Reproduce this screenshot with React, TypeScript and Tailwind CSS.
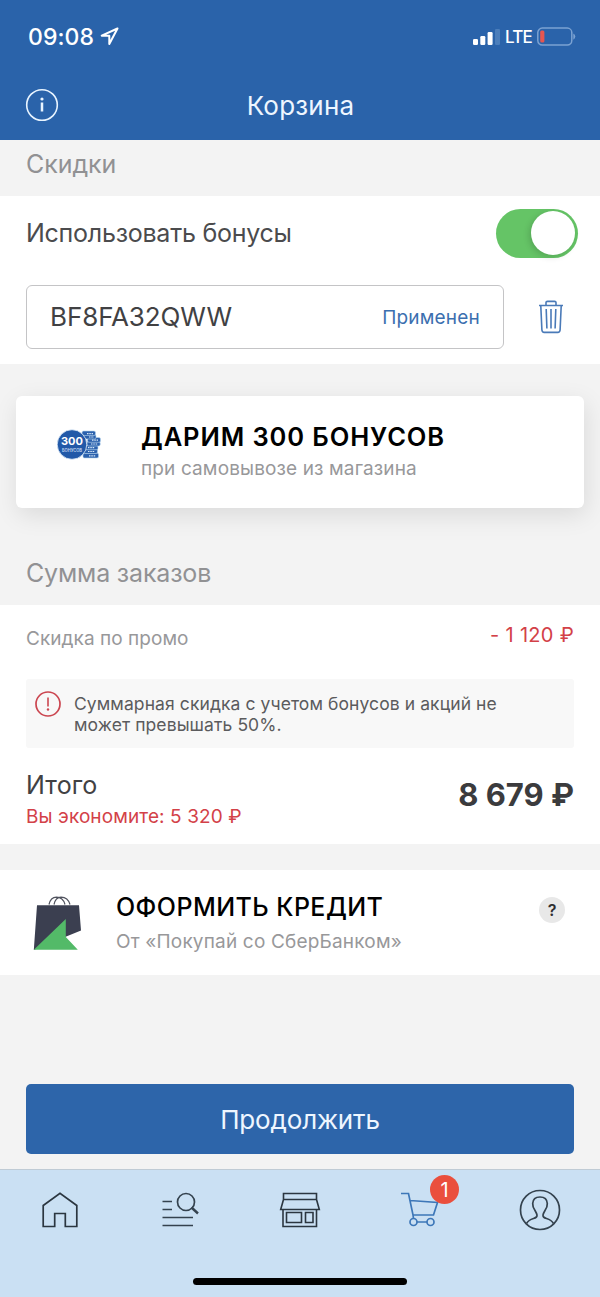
import React from "react";

function StatusBar() {
  return (
    <div className="flex h-[73px] items-center justify-between pl-7 pr-[24px] text-white">
      <div className="flex items-center gap-1.5">
        <span className="text-[23px] font-medium leading-7 tracking-[0.1px]">09:08</span>
        <svg width="19" height="19" viewBox="0 0 19 19" fill="none" stroke="white" strokeWidth="2" strokeLinejoin="round">
          <path d="M17.500 1.500 L1.700 8.700 H9.300 V17 Z" />
        </svg>
      </div>
      <div className="flex items-center">
        <svg width="27" height="18" viewBox="0 0 27 18" fill="white">
          <rect x="0" y="11" width="5" height="6" rx="1.2" />
          <rect x="7.3" y="8" width="5" height="9" rx="1.2" />
          <rect x="14.6" y="4" width="5" height="13" rx="1.2" />
          <rect x="22" y="1" width="5" height="16" rx="1.2" fill="#4b7ebb" />
        </svg>
        <span className="ml-[5px] w-[27px] text-[17px] font-medium leading-6 tracking-[-0.8px]">LTE</span>
        <svg className="ml-[5px]" width="39" height="19" viewBox="0 0 39 19">
          <rect x="0.8" y="1.1" width="34" height="17" rx="4.5" fill="none" stroke="#7ba2d2" strokeWidth="1.5" />
          <rect x="3.2" y="3.5" width="4.200" height="12" rx="1.5" fill="#e65650" />
          <path d="M36.300 6.500 Q38.300 7.700 38.300 9.500 Q38.300 11.500 36.300 12.700Z" fill="#7ba2d2" />
        </svg>
      </div>
    </div>
  );
}

function Header() {
  return (
    <header className="h-[140px] bg-[#2a63aa]">
      <StatusBar />
      <div className="grid h-[64px] grid-cols-[34px_1fr_34px] items-center px-[25px]">
        <svg width="34" height="34" viewBox="0 0 34 34" fill="none" stroke="#e8f4ff">
          <circle cx="17" cy="17" r="15.300" strokeWidth="1.6" />
          <path d="M17 14.500V23.500" strokeWidth="2.500" />
          <circle cx="17" cy="11" r="1.600" fill="#e8f4ff" stroke="none" />
        </svg>
        <h1 className="pl-px pt-[2px] text-center text-[26px] leading-8 tracking-[0.2px] text-[#eef6ff]">Корзина</h1>
      </div>
    </header>
  );
}

function TrashIcon() {
  return (
    <svg width="26" height="34" viewBox="0 0 26 34" fill="none" stroke="#4a7ab8" strokeWidth="1.6" strokeLinejoin="round">
      <path d="M1 5.500H25M8 5V2.600Q8 1.400 9.500 1.400H16.500Q18 1.400 18 2.600V5" />
      <path d="M2.800 6 L3.900 30Q4.100 32.400 6.200 32.400H19.800Q21.900 32.400 22.100 30L23.200 6" />
      <path d="M8.200 9L8.900 28.500M13 9V28.500M17.800 9L17.100 28.500" />
    </svg>
  );
}

function CoinsIcon() {
  return (
    <svg width="44" height="32" viewBox="0 0 44 32">
      <g fill="#2c61ad" stroke="#b9d6ee" strokeWidth="0.600">
        <rect x="26" y="24" width="15.500" height="5" rx="1.500" />
        <rect x="26" y="20" width="14.500" height="4.500" rx="1.500" />
        <rect x="27" y="16.200" width="14" height="4.500" rx="1.500" />
        <rect x="30" y="12.500" width="13.200" height="4.500" rx="1.500" />
        <rect x="30.500" y="8.500" width="13" height="4.800" rx="1.500" />
        <rect x="26" y="5.500" width="13" height="4.500" rx="1.500" />
        <rect x="25" y="2" width="13.500" height="4.500" rx="1.500" />
      </g>
      <path d="M30 4.700h6M32 8h5M35 11.200h6M34 15h7M31 18.700h7M31 22.500h7M32 26.800h7" stroke="#d7e9f8" strokeWidth="1.200" strokeDasharray="1.5 0.8" />
      <circle cx="15" cy="15.500" r="14.800" fill="#2259a8" stroke="#e4f0fa" strokeWidth="0.800" />
      <text x="15" y="16" textAnchor="middle" fontSize="11" fontWeight="700" fill="white" textLength="22" lengthAdjust="spacingAndGlyphs">300</text>
      <text x="15" y="22.800" textAnchor="middle" fontSize="4.400" fontWeight="600" fill="#c5daf2" textLength="20" lengthAdjust="spacingAndGlyphs">БОНУСОВ</text>
    </svg>
  );
}

function BagIcon() {
  return (
    <svg width="49" height="54" viewBox="0 0 49 54">
      <path d="M4 9.300H46L48 34.500L32 41L0.800 54Z" fill="#3b3f50" />
      <path d="M0.800 53.700L32.800 23V41L44.800 53.700Z" fill="#53ba68" />
      <g fill="none" stroke="#50535e" strokeWidth="1.200">
        <path d="M16 8.500Q17.500 1.500 23.500 1.200Q30 1.200 32 8.500" />
        <path d="M21 8.500Q22.500 1.500 28 1.200Q35 1.500 37 8.500" />
      </g>
    </svg>
  );
}

function Discounts() {
  return (
    <section>
      <h2 className="h-14 pl-[26px] pt-2 text-[25px] leading-8 tracking-[-0.05px] text-[#919193]">Скидки</h2>
      <div className="h-[168px] bg-white pl-[26px]">
        <div className="flex h-[74px] items-center justify-between pr-[22px]">
          <span className="text-[25px] leading-8 tracking-[-0.25px] text-[#4b4b4d]">Использовать бонусы</span>
          <button className="flex h-[49px] w-[82px] items-center justify-end rounded-full bg-[#65c466] pr-[3px]" aria-label="Использовать бонусы">
            <span className="size-11 rounded-full bg-white shadow-[-2px_2px_6px_rgba(0,0,0,0.15)]" />
          </button>
        </div>
        <div className="flex items-center pt-[15px]">
          <div className="flex h-[64px] w-[478px] items-center justify-between rounded-[6px] border border-[#c4c4c6] pl-[23px] pr-[23px]">
            <span className="text-[26px] leading-8 tracking-[-0.1px] text-[#414143]">BF8FA32QWW</span>
            <span className="pt-px text-[19px] leading-6 tracking-[0.2px] text-[#3b6faf]">Применен</span>
          </div>
          <button className="ml-[34px]" aria-label="Удалить"><TrashIcon /></button>
        </div>
      </div>
    </section>
  );
}

function BonusCard() {
  return (
    <div className="px-4 pt-8">
      <div className="flex h-28 rounded-[6px] bg-white pl-[41px] shadow-[2px_7px_24px_rgba(0,0,0,0.10)]">
        <div className="w-[84px] pt-[33px]"><CoinsIcon /></div>
        <div className="pt-[25px]">
          <p className="text-[25.500px] font-semibold leading-8 tracking-[0.9px] text-black">ДАРИМ 300 БОНУСОВ</p>
          <p className="mt-1 text-[19px] leading-6 tracking-[0.13px] text-[#98989a]">при самовывозе из магазина</p>
        </div>
      </div>
    </div>
  );
}

function Summary() {
  return (
    <section>
      <h2 className="h-[97px] pl-[26px] pt-[49px] text-[25px] leading-8 tracking-[-0.17px] text-[#919193]">Сумма заказов</h2>
      <div className="h-[239px] bg-white px-[26px]">
        <div className="flex h-[74px] items-start justify-between">
          <span className="pt-[22px] text-[19px] leading-6 tracking-[0.05px] text-[#98989a]">Скидка по промо</span>
          <span className="pt-[18px] text-[20px] leading-6 tracking-[0.3px] text-[#d34148]">- 1 120 ₽</span>
        </div>
        <div className="flex h-[69px] gap-[13px] rounded-[3px] bg-[#f8f8f8] pl-[9px] pt-[12px]">
          <svg className="shrink-0" width="26" height="27" viewBox="0 0 26 27" fill="none" stroke="#cb4650">
            <circle cx="13" cy="13" r="12" strokeWidth="1.700" />
            <path d="M13 6.500V15.500" strokeWidth="1.600" />
            <circle cx="13" cy="18.500" r="1.200" fill="#cb4650" stroke="none" />
          </svg>
          <p className="pt-[3px] text-[17.500px] leading-[20.500px] tracking-[0.09px] text-[#5b5b5d]">Суммарная скидка с учетом бонусов и акций не<br />может превышать 50%.</p>
        </div>
        <div className="flex justify-between pt-[21px]">
          <div>
            <p className="text-[25px] leading-8 tracking-[0.1px] text-[#414143]">Итого</p>
            <p className="mt-[4px] text-[19px] leading-6 tracking-[0.1px] text-[#d34148]">Вы экономите: 5 320 ₽</p>
          </div>
          <p className="pt-[6px] text-[31px] font-bold leading-10 text-[#3b3b3d]">8 679 ₽</p>
        </div>
      </div>
    </section>
  );
}

function Credit() {
  return (
    <section className="mt-[26px] flex h-[105px] bg-white pl-[33px] pr-[35px]">
      <div className="w-[83px] pt-[26px]"><BagIcon /></div>
      <div className="flex-1 pt-[21px]">
        <p className="text-[25px] font-medium leading-8 tracking-[0.45px] text-black">ОФОРМИТЬ КРЕДИТ</p>
        <p className="mt-[7px] text-[19px] leading-6 tracking-[0.18px] text-[#98989a]">От «Покупай со СберБанком»</p>
      </div>
      <span className="mt-[27px] flex size-[26px] items-center justify-center rounded-full bg-[#e8e8e8] text-[16px] font-semibold text-[#2f2f31]">?</span>
    </section>
  );
}

function TabBar() {
  return (
    <nav className="h-[128px] border-t border-[#bfcbd5] bg-[#cae0f3]">
      <div className="grid h-[80px] grid-cols-5 items-center justify-items-center">
        <svg width="44" height="44" viewBox="0 0 44 44" fill="none" stroke="#2b3640" strokeWidth="1.700">
          <path d="M5.200 17.500L22 5.200L38.800 17.500V38.500H27.300V25.500H16.700V38.500H5.200Z" />
        </svg>
        <svg width="44" height="44" viewBox="0 0 44 44" fill="none" stroke="#34424e" strokeWidth="1.700">
          <path d="M4.500 13.500H14M4.500 21.500H14M4.500 29.500H35M4.500 37.500H35" />
          <circle cx="28" cy="14" r="8.500" />
          <path d="M33.500 19.500L40 25.500" strokeWidth="2.400" />
        </svg>
        <svg width="44" height="44" viewBox="0 0 44 44" fill="none" stroke="#2b3640" strokeWidth="1.600">
          <path d="M5.500 5.500H38.500V11.500H5.500ZM5.500 11.500L2.700 21.500H41.300L38.500 11.500M5 21.500V38.500H38.500V21.500M8.500 24.500H23.500V34.500H8.500ZM27.500 24.500H35V34.500H27.500Z" />
        </svg>
        <div className="relative">
          <svg width="44" height="44" viewBox="0 0 44 44" fill="none" stroke="#3d77b8" strokeWidth="1.700">
            <path d="M3 5.500H10.500L15 27H35.500L39.500 14.500L12 12.500M15 27L15.500 30.500M19 34H29" />
            <circle cx="15.500" cy="34" r="3.500" />
            <circle cx="32.500" cy="34" r="3.500" />
          </svg>
          <span className="absolute -top-[13px] left-[32px] flex size-[29px] items-center justify-center rounded-full bg-[#ea4f3d] text-[20px] leading-none text-white">1</span>
        </div>
        <svg width="44" height="44" viewBox="0 0 44 44" fill="none" stroke="#34424e" strokeWidth="1.700">
          <circle cx="22" cy="22" r="19.500" />
          <path d="M8.500 35.500Q10.500 32 15.500 30.500Q19.300 29.500 19 27Q18.800 25.500 17 22.500Q14.500 19 14.700 15.500Q15 9 22 9Q29 9 29.300 15.500Q29.500 19 27 22.500Q25.200 25.500 25 27Q24.700 29.500 28.500 30.500Q33.500 32 35.500 35.500" />
        </svg>
      </div>
      <div className="mx-auto mt-[28px] h-[7px] w-[214px] rounded-full bg-black" />
    </nav>
  );
}

export default function App() {
  return (
    <div className="flex h-[1297px] w-[600px] flex-col overflow-hidden bg-[#f3f3f3] font-['Inter','Noto_Sans',sans-serif]">
      <Header />
      <Discounts />
      <BonusCard />
      <Summary />
      <Credit />
      <div className="px-[26px] pb-[15px] pt-[109px]">
        <button className="h-[70px] w-full rounded-[5px] bg-[#2d65aa] pt-px text-[26px] leading-8 tracking-[-0.15px] text-[#eef6ff]">Продолжить</button>
      </div>
      <TabBar />
    </div>
  );
}
